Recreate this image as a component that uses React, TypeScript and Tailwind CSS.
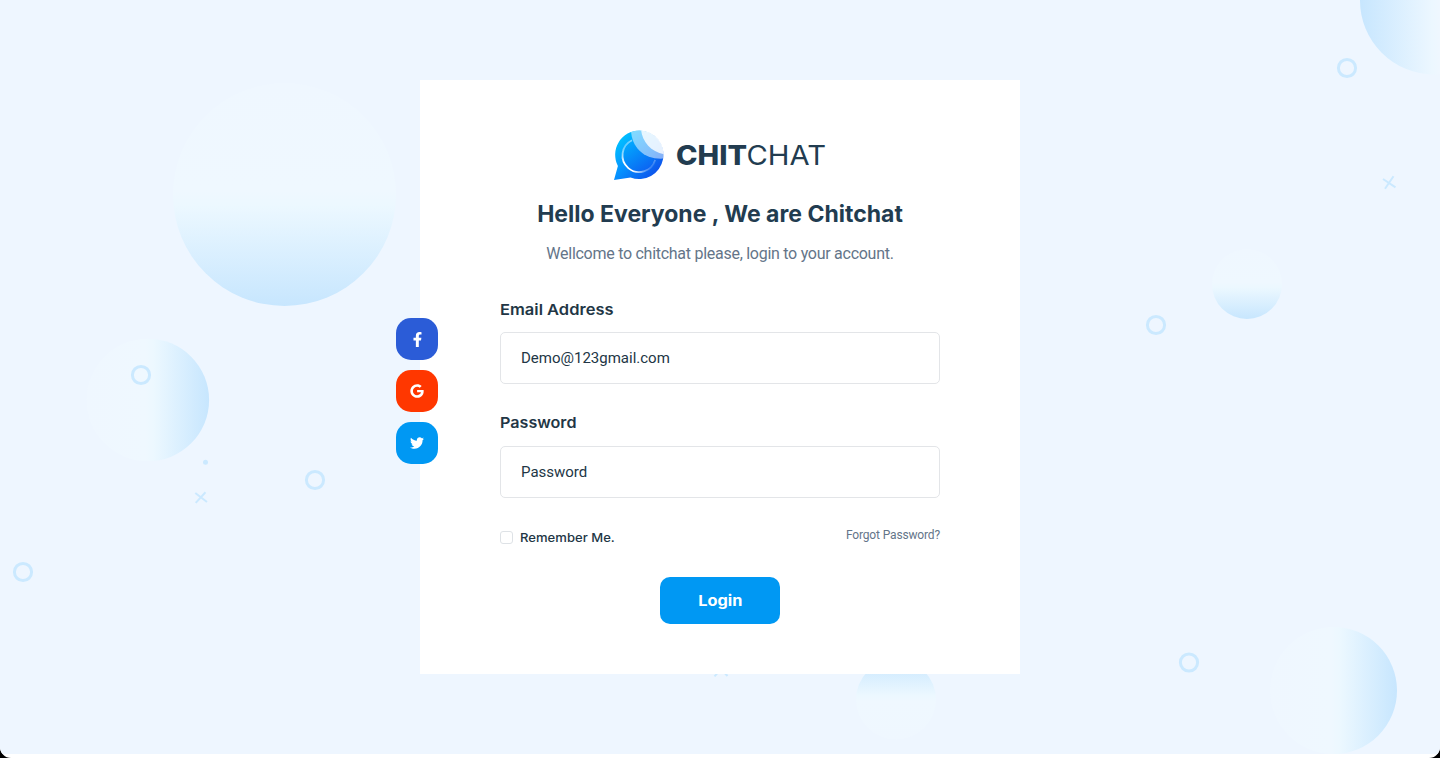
import { FaFacebookF, FaGoogle, FaTwitter } from "react-icons/fa";

const rings = [
  [1347, 68],
  [1156, 325],
  [141, 375],
  [315, 480],
  [23, 572],
  [1189, 662.5],
];

function Backdrop() {
  return (
    <svg className="absolute inset-0" width="1440" height="754" viewBox="0 0 1440 754" aria-hidden="true">
      <defs>
        <linearGradient id="down" x1="0" y1="0" x2="0" y2="1">
          <stop offset="0" stopColor="#eff7ff" />
          <stop offset="0.48" stopColor="#eff8ff" />
          <stop offset="0.55" stopColor="#ecf8ff" />
          <stop offset="1" stopColor="#c7e6fe" />
        </linearGradient>
        <linearGradient id="up" href="#down" x1="0" y1="1" x2="0" y2="0" />
        <linearGradient id="right" href="#down" x1="0" y1="0" x2="1" y2="0" />
        <linearGradient id="corner" gradientUnits="userSpaceOnUse" x1="1360" y1="0" x2="1440" y2="0">
          <stop offset="0" stopColor="#c7e6fe" />
          <stop offset="0.9" stopColor="#ecf7ff" />
          <stop offset="1" stopColor="#eff7ff" />
        </linearGradient>
      </defs>
      <circle cx="284.5" cy="194.5" r="111.5" fill="url(#down)" />
      <circle cx="147.8" cy="400" r="61.3" fill="url(#right)" />
      <circle cx="1434" cy="0.5" r="74" fill="url(#corner)" />
      <circle cx="1247" cy="284" r="35" fill="url(#down)" />
      <circle cx="896" cy="699.5" r="40" fill="url(#up)" />
      <circle cx="1333.5" cy="690.5" r="63.5" fill="url(#right)" />
      <g fill="none" stroke="#cbe9ff" strokeWidth="3">
        {rings.map(([x, y]) => (
          <circle key={x} cx={x} cy={y} r="8.6" />
        ))}
      </g>
      <circle cx="205.5" cy="462.3" r="2.5" fill="#cbe9ff" />
      <g stroke="#cbe9ff" strokeWidth="2">
        <path d="M195.3 493l11.7 9M205.5 492.3l-9.8 10.6" />
        <path d="M1383 179l12.5 8.4M1393.5 176.3l-8.5 12.4" />
        <path d="M714.5 676.3l10-11M717.5 665l10 11" />
      </g>
    </svg>
  );
}

function LogoMark() {
  return (
    <svg className="shrink-0" width="50" height="50" viewBox="0 0 50 50" aria-hidden="true">
      <defs>
        <linearGradient id="bubble" x1="0.1" y1="0.15" x2="0.85" y2="0.85">
          <stop offset="0" stopColor="#00c2ff" />
          <stop offset="0.45" stopColor="#0594ff" />
          <stop offset="1" stopColor="#0d55ec" />
        </linearGradient>
        <linearGradient id="disc" x1="0.1" y1="0" x2="0.8" y2="1">
          <stop offset="0" stopColor="#00b0ff" />
          <stop offset="1" stopColor="#0c60f2" />
        </linearGradient>
        <linearGradient id="arc" gradientUnits="userSpaceOnUse" x1="14" y1="10" x2="42" y2="32">
          <stop offset="0" stopColor="#fff" stopOpacity="0.3" />
          <stop offset="0.3" stopColor="#fff" />
          <stop offset="0.65" stopColor="#fff" />
          <stop offset="1" stopColor="#fff" stopOpacity="0.15" />
        </linearGradient>
        <clipPath id="round">
          <circle cx="25.5" cy="24.8" r="24.3" />
        </clipPath>
      </defs>
      <path d="M25.5.5a24.3 24.3 0 1 1-9 47L0 50l3.9-14A24.3 24.3 0 0 1 25.5.5z" fill="url(#bubble)" />
      <circle cx="25.2" cy="25.5" r="16" fill="url(#disc)" />
      <path d="M18 10.3A16.7 16.7 0 1 0 41.2 30" fill="none" stroke="url(#arc)" strokeWidth="1.8" />
      <g clipPath="url(#round)">
        <path d="M17-1C17 18 31 30.500 51 28.500V-1z" fill="#fff" fillOpacity="0.5" />
        <path d="M27-1C28 12 37 22 51 24.500V-1z" fill="#fff" fillOpacity="0.8" />
      </g>
    </svg>
  );
}

const social = "flex h-[42px] w-[42px] items-center justify-center rounded-[15px] text-white";
const label = "block w-fit origin-left font-[Inter] text-[15px] leading-5 font-semibold";
const input =
  "h-[52px] w-full rounded-[5px] border border-[#e3e5e8] bg-white px-5 font-[Roboto] text-[15px] text-[#223645] outline-none placeholder:text-[#223645] placeholder:opacity-100";

export default function App() {
  return (
    <div className="h-[758px] w-[1440px] overflow-hidden bg-black">
      <div className="h-full overflow-hidden rounded-b-[11px] bg-white">
        <main className="relative flex h-[754px] justify-center bg-[#eef6ff] pt-20 text-[#223645]">
          <Backdrop />
          <section className="relative h-[594px] w-[600px] bg-white px-20 pt-[50px]">
            <div className="flex h-[50px] items-center justify-center gap-3">
              <LogoMark />
              <svg width="150" height="32" viewBox="0 0 150 32" fill="#223c50" fontFamily="Inter, sans-serif" fontSize="27">
                <text x="0" y="25.5" fontWeight="800" textLength="71" lengthAdjust="spacingAndGlyphs">CHIT</text>
                <text x="70.500" y="25.5" fontWeight="400" textLength="79.500" lengthAdjust="spacingAndGlyphs">CHAT</text>
              </svg>
            </div>
            <h1 className="mt-[18px] text-center font-[Inter] text-[23px] leading-8 font-[650] whitespace-nowrap text-[#223c50]">
              Hello Everyone , We are Chitchat
            </h1>
            <p className="mt-[11px] text-center font-[Roboto] text-[16px] leading-[25px] tracking-[-0.27px] text-[#647589]">
              Wellcome to chitchat please, login to your account.
            </p>
            <form className="mt-[33px]">
              <label className="block">
                <span className={"relative top-px scale-x-[1.1] " + label}>Email Address</span>
                <input className={input + " mt-[13px]"} placeholder="Demo@123gmail.com" />
              </label>
              <label className="mt-[29px] block">
                <span className={"scale-x-[1.075] " + label}>Password</span>
                <input className={input + " mt-[13px]"} type="password" placeholder="Password" />
              </label>
              <div className="mt-[27px] flex h-[26px] justify-between">
                <label className="flex h-[25px] items-center gap-[7px] font-[Inter] text-[12px] leading-6 font-medium">
                  <input type="checkbox" className="h-[13px] w-[13px] appearance-none rounded-[3px] border border-[#dee2e6] bg-white" />
                  <span className="origin-left scale-x-[1.09]">Remember Me.</span>
                </label>
                <a className="font-[Roboto] text-[12px] leading-5 tracking-[-0.15px] text-[#647589]">Forgot Password?</a>
              </div>
              <button type="button" className="mx-auto mt-[26px] block h-[47px] w-[120px] rounded-[10px] bg-[#0098f3] pt-0.5 font-[Inter] text-[15px] font-bold text-white">
                <span className="inline-block scale-x-[1.09]">Login</span>
              </button>
            </form>
            <div className="absolute top-[238px] -left-6 flex flex-col gap-2.5">
              <a className={social + " bg-[#2b5cd7]"}><FaFacebookF size={15} /></a>
              <a className={social + " bg-[#ff3700]"}><FaGoogle size={14} /></a>
              <a className={social + " bg-[#0098f3]"}><FaTwitter size={14} /></a>
            </div>
          </section>
        </main>
      </div>
    </div>
  );
}
